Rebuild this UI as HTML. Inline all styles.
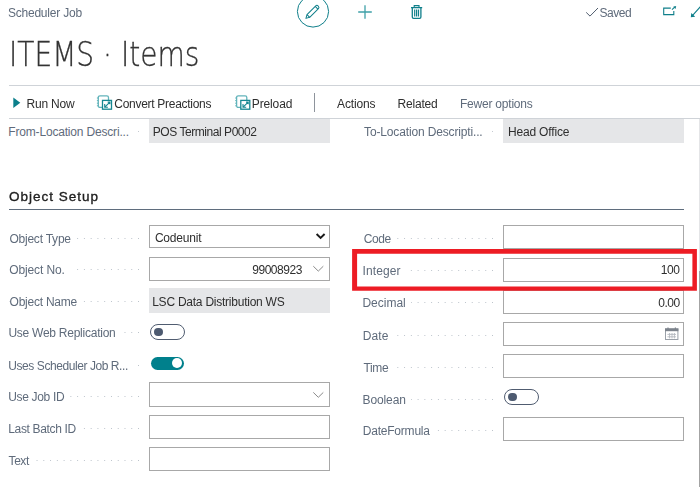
<!DOCTYPE html>
<html lang="en">
<head>
<meta charset="utf-8">
<title>Scheduler Job - ITEMS · Items</title>
<style>
html,body{margin:0;padding:0;background:#fff;}
body{width:700px;height:487px;position:relative;overflow:hidden;font-family:"Liberation Sans",sans-serif;color:#212121;}
.t{position:absolute;white-space:nowrap;font-size:12px;line-height:14px;z-index:3;}
.lb{background:#fff;padding-right:5px;}
.title{position:absolute;white-space:nowrap;left:8.5px;top:35px;font-family:"DejaVu Sans","Liberation Sans",sans-serif;font-weight:200;font-size:33px;line-height:40px;color:#333;-webkit-text-stroke:0.3px #333;transform-origin:0 0;transform:scaleX(0.85);}
.hr{position:absolute;height:1px;background:#cfd3d8;}
.dots{position:absolute;height:1px;background-image:linear-gradient(90deg,transparent 0,transparent 5.77px,#bcc3cb 5.77px,#bcc3cb 6.77px);background-size:6.77px 1px;background-repeat:repeat-x;background-position:right top;z-index:1;}
.box{position:absolute;box-sizing:border-box;border:1px solid #a8a8a8;background:#fff;width:181px;}
.ro{position:absolute;box-sizing:border-box;background:#e5e6e8;width:181px;}
.tog{position:absolute;box-sizing:border-box;width:35px;height:16px;border:1px solid #505c70;border-radius:8px;background:#fff;}
.tog i{position:absolute;left:3px;top:3px;width:9px;height:8px;border-radius:4px;background:#4d5a70;}
.togon{position:absolute;width:33.2px;height:13.4px;border-radius:6.7px;background:#00808c;}
.togon i{position:absolute;right:2px;top:1.8px;width:9.8px;height:9.8px;border-radius:50%;background:#fff;}
svg{position:absolute;overflow:visible;}
#page{position:absolute;left:0;top:0;width:700px;height:487px;overflow:hidden;filter:blur(0.3px);}
</style>
</head>
<body>
<div id="page">
<div class="title">ITEMS · Items</div>
<svg style="left:0;top:0" width="700" height="30" viewBox="0 0 700 30">
<circle cx="313" cy="11.5" r="15.6" fill="#fff" stroke="#0f7f8a" stroke-width="1"/>
<g transform="translate(312.3 12) rotate(-45)" fill="none" stroke="#0f7f8a" stroke-width="1" stroke-linejoin="round">
<path d="M-9 0L-5.6 -1.9H6.8Q8.4 -1.9 8.4 0Q8.4 1.9 6.8 1.9H-5.6Z"/><path d="M-5.6 -1.9V1.9M6 -1.9V1.9"/>
</g>
<path d="M365 5.2V18.8M358.2 12H371.8" stroke="#3fa0a8" stroke-width="1.3" fill="none"/>
<g fill="none" stroke="#0f7f8a" stroke-width="1.1">
<path d="M411 7.6H422.2M414.2 7.4V5.6H419V7.4"/>
<path d="M412.3 7.8V17Q412.3 18.3 413.6 18.3H419.6Q420.9 18.3 420.9 17V7.8" stroke-width="1.3"/>
<path d="M414.7 9.6V16.4M416.6 9.6V16.4M418.5 9.6V16.4" stroke-width="1.2"/>
</g>
<path d="M586.2 12.4L590 16.1L598 8" stroke="#505c6d" stroke-width="1" fill="none"/>
<g fill="none" stroke="#0f7f8a" stroke-width="1.1">
<path d="M670.8 8.1H663.7V14.6H673.8V11"/>
<path d="M672 9.7L675 6.9M692.4 15.6L701 6"/>
<path d="M676.2 5.9L673.2 6.7L675.5 9Z M690.8 17.2L691.3 12.9L695.2 16.7Z" fill="#0f7f8a" stroke="none"/>
</g>
</svg>
<div class="hr" style="left:9px;top:85px;width:691px;"></div>
<div class="hr" style="left:9px;top:118px;width:691px;"></div>
<div style="position:absolute;left:699px;top:119px;width:1px;height:152px;background:#e4e5e7;"></div>
<div style="position:absolute;left:699px;top:271px;width:1px;height:216px;background:#a4a4a4;"></div>
<svg style="left:0;top:90px" width="700" height="26" viewBox="0 90 700 26">
<path d="M13.3 97.6L20.3 102.8L13.3 108Z" fill="#0b7f8b"/>
<g transform="translate(97.3 95.1)" fill="none">
<rect x="1" y="0.7" width="10.2" height="11.6" rx="1.6" stroke="#63b4bb" stroke-width="1.3"/>
<path d="M-0.4 2.9H1.2M-0.4 5.5H1.2M-0.4 8.1H1.2M-0.4 10.7H1.2" stroke="#63b4bb" stroke-width="1"/>
<rect x="5.2" y="5.3" width="9" height="8.8" fill="#fff" stroke="#168791" stroke-width="1.3"/>
<path d="M12.6 7L8 11.6M7.4 9V12.2H10.6M10.4 7H12.6V9.2" stroke="#168791" stroke-width="1.1"/>
</g>
<g transform="translate(235.6 95.1)" fill="none">
<rect x="1" y="0.7" width="10.2" height="11.6" rx="1.6" stroke="#63b4bb" stroke-width="1.3"/>
<path d="M-0.4 2.9H1.2M-0.4 5.5H1.2M-0.4 8.1H1.2M-0.4 10.7H1.2" stroke="#63b4bb" stroke-width="1"/>
<rect x="5.2" y="5.3" width="9" height="8.8" fill="#fff" stroke="#168791" stroke-width="1.3"/>
<path d="M12.6 7L8 11.6M7.4 9V12.2H10.6M10.4 7H12.6V9.2" stroke="#168791" stroke-width="1.1"/>
</g>
<path d="M314.5 93V112" stroke="#8e949c" stroke-width="1"/>
</svg>
<div class="ro" style="left:149px;top:119px;height:24px;"></div>
<div class="ro" style="left:503px;top:119px;height:24px;"></div>
<div style="position:absolute;left:138px;top:131px;width:1px;height:1px;background:#c5cad1;"></div><div style="position:absolute;left:492px;top:131px;width:1px;height:1px;background:#c5cad1;"></div>
<div style="position:absolute;left:9px;top:209px;width:675px;height:1px;background:#5f6d7d;"></div>
<div class="dots" style="left:9px;width:130px;top:238px;"></div><div class="dots" style="left:9px;width:130px;top:269px;"></div><div class="dots" style="left:9px;width:130px;top:301px;"></div><div class="dots" style="left:9px;width:130px;top:332px;"></div><div class="dots" style="left:9px;width:130px;top:365px;"></div><div class="dots" style="left:9px;width:130px;top:396px;"></div><div class="dots" style="left:9px;width:130px;top:428px;"></div><div class="dots" style="left:9px;width:130px;top:460px;"></div><div class="dots" style="left:364px;width:129px;top:238px;"></div><div class="dots" style="left:364px;width:129px;top:270px;"></div><div class="dots" style="left:364px;width:129px;top:302px;"></div><div class="dots" style="left:364px;width:129px;top:335px;"></div><div class="dots" style="left:364px;width:129px;top:367px;"></div><div class="dots" style="left:364px;width:129px;top:399px;"></div><div class="dots" style="left:364px;width:129px;top:430px;"></div>
<div class="box" style="left:149px;top:225px;height:23px;"></div>
<div class="box" style="left:149px;top:257px;height:24px;"></div>
<div class="ro" style="left:149px;top:288px;height:25px;"></div>
<div class="tog" style="left:150px;top:324px;"><i></i></div>
<div class="togon" style="left:150.8px;top:356.6px;"><i></i></div>
<div class="box" style="left:149px;top:382px;height:25px;"></div>
<div class="box" style="left:149px;top:415px;height:24px;"></div>
<div class="box" style="left:149px;top:447px;height:24px;"></div>
<div class="box" style="left:503px;top:225px;height:24px;"></div>
<div class="box" style="left:503px;top:258px;height:24px;"></div>
<div class="box" style="left:503px;top:290px;height:24px;"></div>
<div class="box" style="left:503px;top:322px;height:24px;"></div>
<div class="box" style="left:503px;top:354px;height:24px;"></div>
<div class="box" style="left:503px;top:417px;height:24px;"></div>
<div class="tog" style="left:503.5px;top:389.3px;"><i></i></div>
<svg style="left:0;top:220px;z-index:4" width="700" height="267" viewBox="0 220 700 267">
<path d="M316.6 234L320.6 238L324.6 234" stroke="#1a1a1a" stroke-width="1.9" fill="none"/>
<path d="M313.3 266.2L318.3 271.1L323.3 266.2" stroke="#8a8a8a" stroke-width="1" fill="none"/>
<path d="M313.3 392.4L318.3 397.3L323.3 392.4" stroke="#8a8a8a" stroke-width="1" fill="none"/>
<g>
<rect x="665.5" y="328.9" width="12.4" height="10.6" fill="#fff" stroke="#9aa0a8" stroke-width="1"/>
<rect x="665" y="328.4" width="13.4" height="2.8" fill="#7c838c"/>
<path d="M668 327.4V329M675.4 327.4V329" stroke="#7c838c" stroke-width="1.2"/>
<path d="M669.6 333V338.4M672 333V338.4M674.4 333V338.4M667.4 334.4H676M667.4 336.8H676" stroke="#b3b8bf" stroke-width="0.9" fill="none"/>
</g>
<path fill-rule="evenodd" fill="#ed1c24" d="M352.1 249H696.9V290.7H352.1ZM357.1 253.8V286.4H692.4V253.8Z"/>
</svg>
<div class="t" style="left:7.9px;top:6px;color:#5f6b7b;letter-spacing:-0.21px;">Scheduler Job</div>
<div class="t" style="left:599.5px;top:6px;color:#5f6b7b;letter-spacing:-0.45px;">Saved</div>
<div class="t" style="left:26.5px;top:97px;color:#2e2e2e;letter-spacing:-0.2px;">Run Now</div>
<div class="t" style="left:114.3px;top:97px;color:#2e2e2e;letter-spacing:-0.29px;">Convert Preactions</div>
<div class="t" style="left:251.8px;top:97px;color:#2e2e2e;letter-spacing:-0.13px;">Preload</div>
<div class="t" style="left:337.1px;top:97px;color:#2e2e2e;letter-spacing:-0.16px;">Actions</div>
<div class="t" style="left:397.4px;top:97px;color:#2e2e2e;letter-spacing:-0.17px;">Related</div>
<div class="t" style="left:460.0px;top:97px;color:#5f6b7b;letter-spacing:-0.22px;">Fewer options</div>
<div class="t lb" style="left:8.3px;top:125px;color:#5f6b7b;letter-spacing:-0.18px;">From-Location Descri...</div>
<div class="t" style="left:152.8px;top:125px;color:#2e2e2e;letter-spacing:-0.45px;">POS Terminal P0002</div>
<div class="t lb" style="left:364.1px;top:125px;color:#5f6b7b;letter-spacing:-0.15px;">To-Location Descripti...</div>
<div class="t" style="left:507.9px;top:125px;color:#2e2e2e;letter-spacing:-0.16px;">Head Office</div>
<div class="t" style="left:9.0px;top:190px;color:#212121;letter-spacing:0.99px;font-size:13.5px;-webkit-text-stroke:0.35px #212121;">Object Setup</div>
<div class="t lb" style="left:9.4px;top:232px;color:#5f6b7b;letter-spacing:-0.22px;">Object Type</div>
<div class="t lb" style="left:9.2px;top:263px;color:#5f6b7b;letter-spacing:-0.11px;padding-right:8px;">Object No.</div>
<div class="t lb" style="left:9.6px;top:295px;color:#5f6b7b;letter-spacing:-0.24px;">Object Name</div>
<div class="t lb" style="left:8.4px;top:326px;color:#5f6b7b;letter-spacing:-0.25px;">Use Web Replication</div>
<div class="t lb" style="left:8.3px;top:359px;color:#5f6b7b;letter-spacing:-0.43px;">Uses Scheduler Job R...</div>
<div class="t lb" style="left:8.2px;top:390px;color:#5f6b7b;letter-spacing:-0.33px;">Use Job ID</div>
<div class="t lb" style="left:8.2px;top:422px;color:#5f6b7b;letter-spacing:-0.33px;">Last Batch ID</div>
<div class="t lb" style="left:8.6px;top:454px;color:#5f6b7b;letter-spacing:-0.45px;">Text</div>
<div class="t lb" style="left:363.8px;top:232px;color:#5f6b7b;letter-spacing:-0.4px;">Code</div>
<div class="t lb" style="left:362.6px;top:264px;color:#5f6b7b;letter-spacing:0.1px;">Integer</div>
<div class="t lb" style="left:362.4px;top:296px;color:#5f6b7b;">Decimal</div>
<div class="t lb" style="left:362.8px;top:329px;color:#5f6b7b;letter-spacing:0.1px;">Date</div>
<div class="t lb" style="left:363.6px;top:361px;color:#5f6b7b;letter-spacing:-0.4px;">Time</div>
<div class="t lb" style="left:362.6px;top:393px;color:#5f6b7b;letter-spacing:-0.13px;">Boolean</div>
<div class="t lb" style="left:362.8px;top:424px;color:#5f6b7b;letter-spacing:-0.22px;">DateFormula</div>
<div class="t" style="left:154.9px;top:231px;color:#2e2e2e;letter-spacing:-0.2px;">Codeunit</div>
<div class="t" style="left:252.2px;top:263px;color:#2e2e2e;letter-spacing:-0.45px;">99008923</div>
<div class="t" style="left:152.2px;top:295px;color:#2e2e2e;letter-spacing:-0.24px;">LSC Data Distribution WS</div>
<div class="t" style="left:660.8px;top:263px;color:#2e2e2e;letter-spacing:-0.45px;">100</div>
<div class="t" style="left:658.2px;top:296px;color:#2e2e2e;letter-spacing:-0.45px;">0.00</div>
</div>
</body>
</html>
